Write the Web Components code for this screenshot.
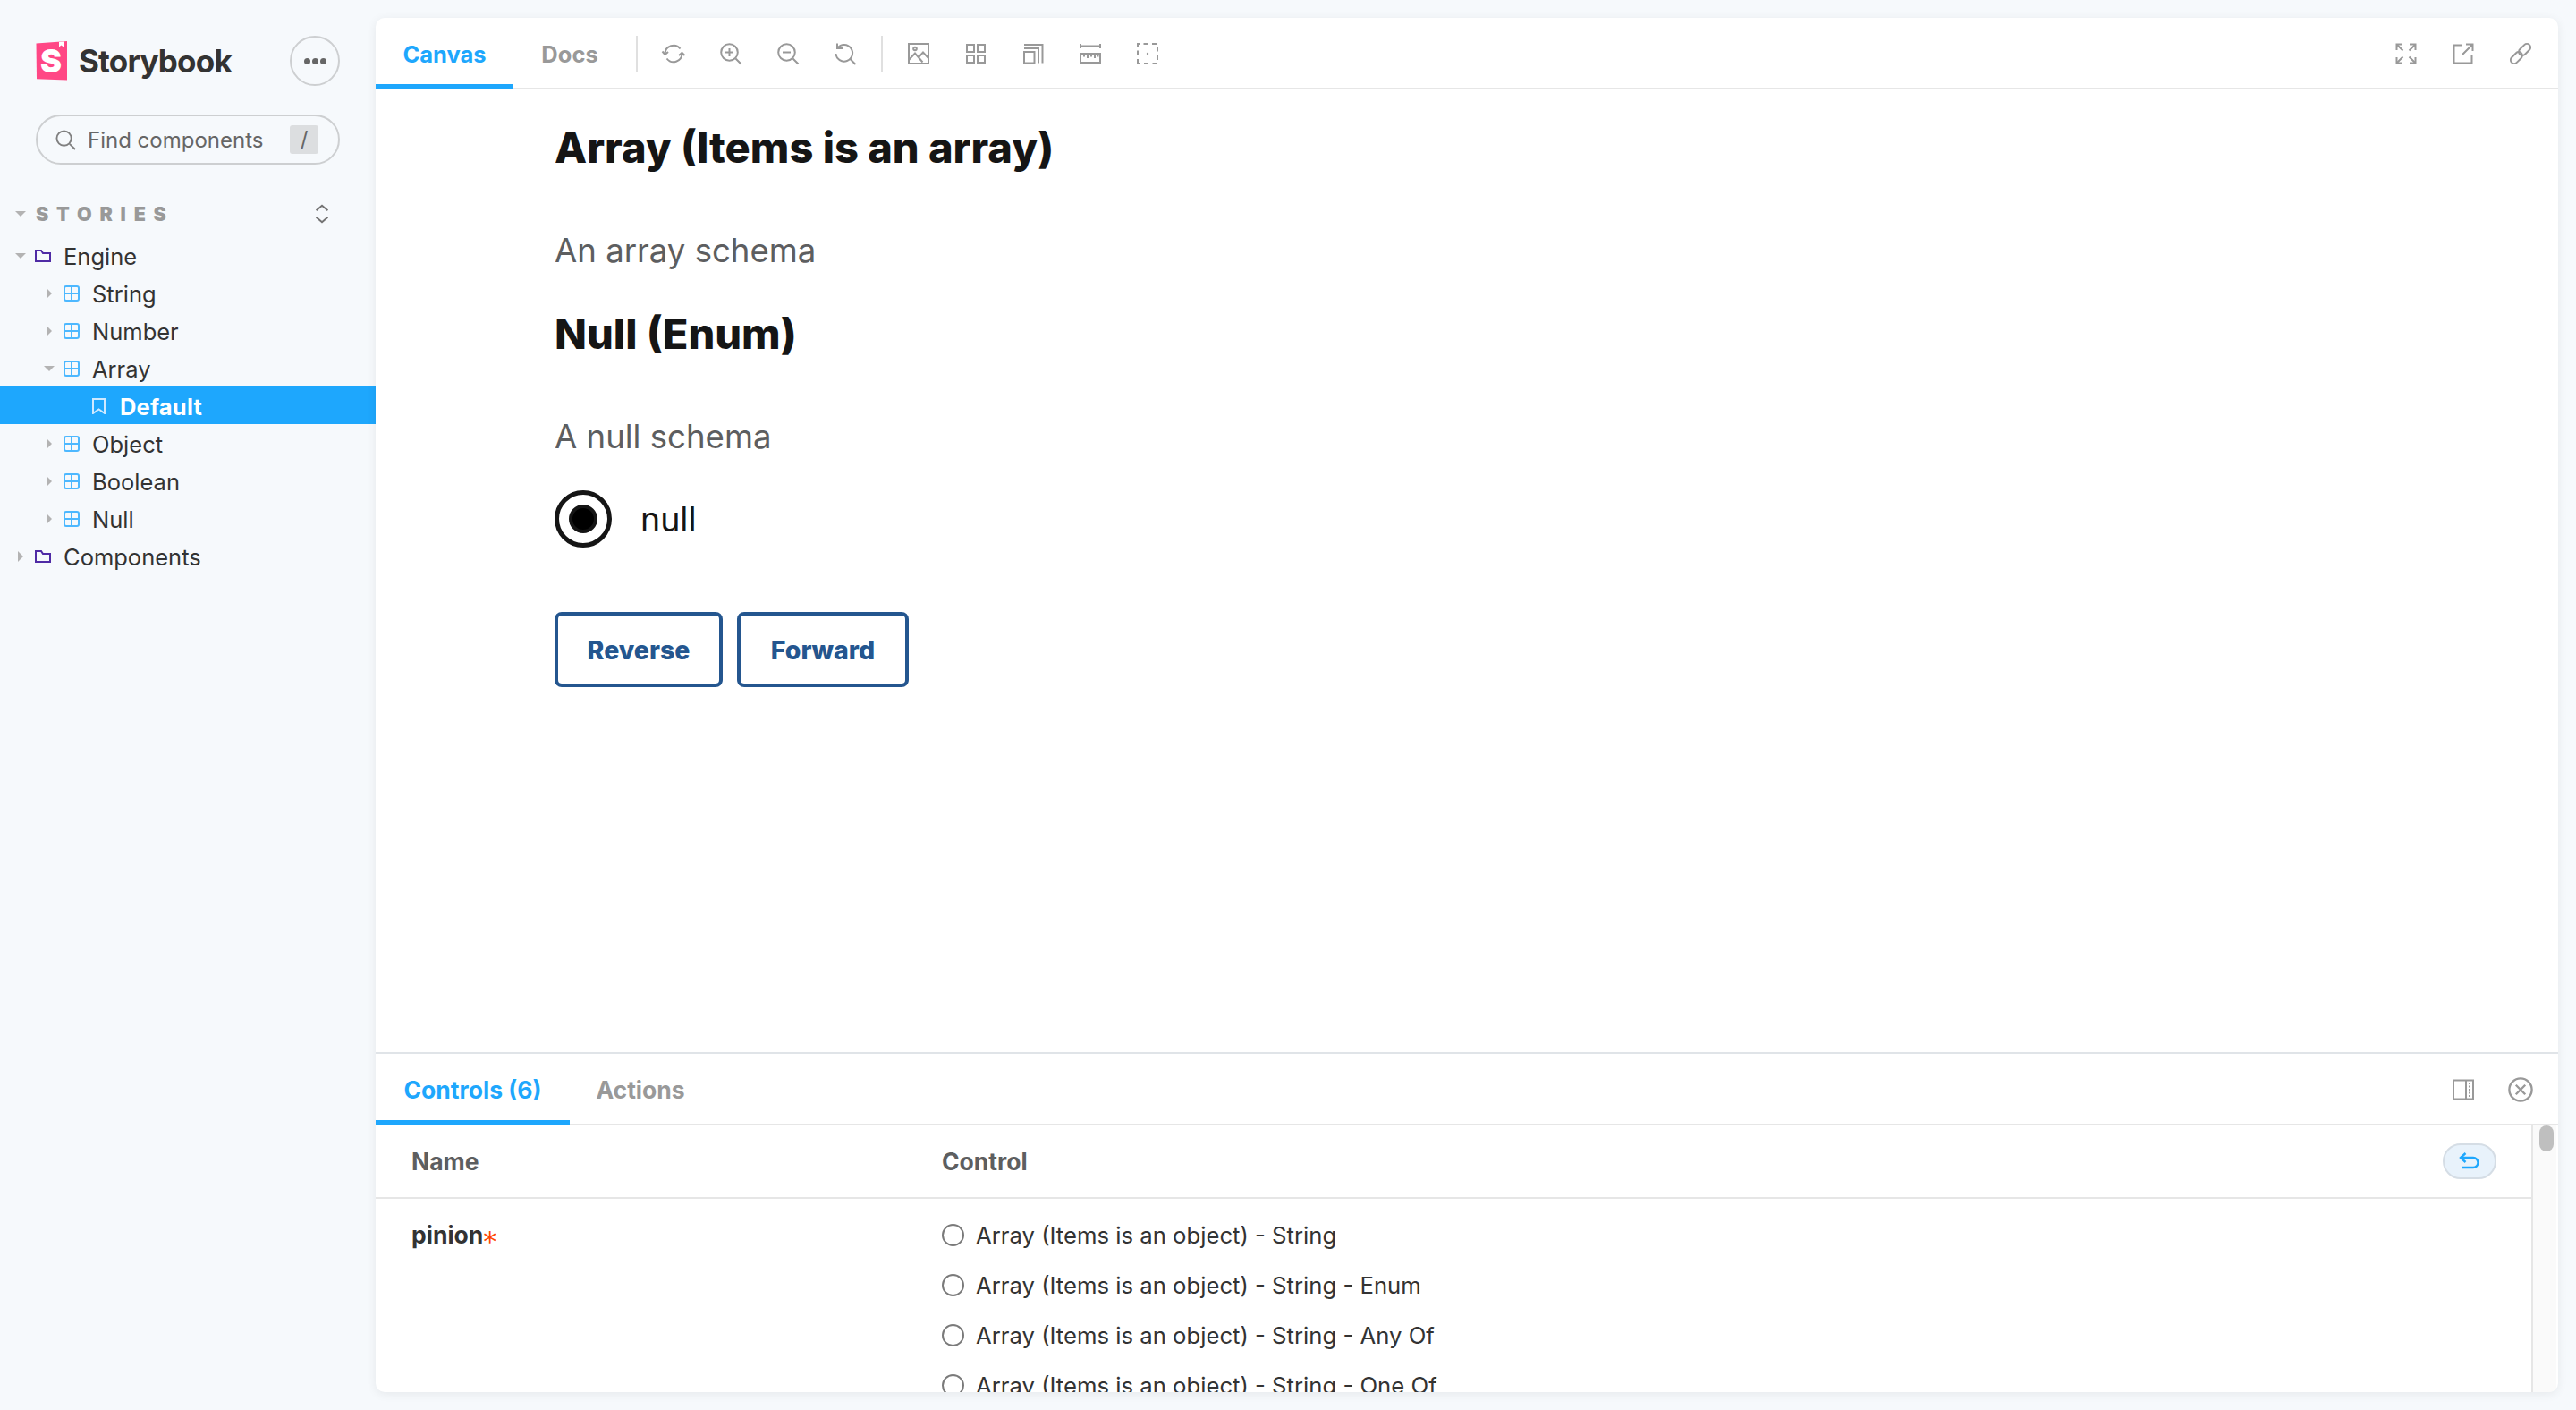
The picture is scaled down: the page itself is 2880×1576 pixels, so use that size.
<!DOCTYPE html>
<html lang="en">
  <head>
    <meta charset="UTF-8" />
    <title>Storybook</title>
    <style>
      html, body { margin: 0; height: 100%; overflow: hidden; background: #f6f9fc; }
    </style>
  </head>
  <body>
    <sb-app>
      <sb-sidebar slot="sidebar">
        <sb-tree-item depth="0" kind="folder" caret="down">Engine</sb-tree-item>
        <sb-tree-item depth="1" kind="component" caret="right">String</sb-tree-item>
        <sb-tree-item depth="1" kind="component" caret="right">Number</sb-tree-item>
        <sb-tree-item depth="1" kind="component" caret="down">Array</sb-tree-item>
        <sb-tree-item depth="2" kind="story" selected>Default</sb-tree-item>
        <sb-tree-item depth="1" kind="component" caret="right">Object</sb-tree-item>
        <sb-tree-item depth="1" kind="component" caret="right">Boolean</sb-tree-item>
        <sb-tree-item depth="1" kind="component" caret="right">Null</sb-tree-item>
        <sb-tree-item depth="0" kind="folder" caret="right">Components</sb-tree-item>
      </sb-sidebar>
      <sb-toolbar slot="toolbar"></sb-toolbar>
      <sb-preview slot="preview"></sb-preview>
      <sb-addons slot="addons">
        <sb-control-option>Array (Items is an object) - String</sb-control-option>
        <sb-control-option>Array (Items is an object) - String - Enum</sb-control-option>
        <sb-control-option>Array (Items is an object) - String - Any Of</sb-control-option>
        <sb-control-option>Array (Items is an object) - String - One Of</sb-control-option>
      </sb-addons>
    </sb-app>

    <script>
      const UI_FONT = 'Inter, "Noto Sans", sans-serif';
      const HEAD_FONT = 'Inter, "Noto Sans", sans-serif';

      // icon shapes, all on a 24 box
      const ICONS = {
        sync: '<path d="M2.5 12a9.5 9.5 0 0 1 17-5.5"/><path d="M21.5 12a9.5 9.5 0 0 1-17 5.5"/><path d="M-0.5 9.5 2.5 13l3.5-3"/><path d="M18 14l3.5-3.2 3 3.2"/>',
        zoomin: '<circle cx="10.5" cy="10.5" r="9.3"/><path d="M17.5 17.5 23.5 23.5M10.5 6v9M6 10.5h9"/>',
        zoomout: '<circle cx="10.5" cy="10.5" r="9.3"/><path d="M17.5 17.5 23.5 23.5M6 10.5h9"/>',
        zoomreset: '<path d="M3.5 5.5A9.3 9.3 0 1 1 1.5 12"/><path d="M3 .5v5.5h6"/><path d="M17.5 18 23.5 24"/>',
        image: '<rect x="1" y="1" width="22" height="22"/><circle cx="8" cy="6.5" r="1.8"/><path d="M1 19l7-7.5 8.5 10M12.5 15.5l4.5-5 6 6.5"/>',
        grid: '<rect x="2" y="2" width="8" height="8"/><rect x="14" y="2" width="8" height="8"/><rect x="2" y="14" width="8" height="8"/><rect x="14" y="14" width="8" height="8"/>',
        outline: '<rect x="2" y="10" width="11.5" height="12.5"/><path d="M2 6h16v16.5M2 2h20.5v20.5"/>',
        ruler: '<path d="M1 1v5M23 1v5M1 3.500h22"/><rect x="1" y="12" width="22" height="10"/><path d="M5 12v3.500M9 12v5M13 12v3.500M17 12v5M20.500 12v3.500"/>',
        dashed: '<path stroke-dasharray="5 4.500" d="M1 23V1h22v22z"/><circle cx="12" cy="12" r="1.200" fill="#999" stroke="none"/>',
        expand: '<path d="M2 2l6.500 6.500M22 2l-6.500 6.500M2 22l6.500-6.500M22 22l-6.500-6.500"/><path d="M1.500 8V1.500H8M16 1.500h6.500V8M1.500 16v6.500H8M16 22.500h6.500V16"/>',
        share: '<path d="M11 2.500H1.500v20h20V13"/><path d="M11 13 22 2M15 1.500h7.500V9"/>',
        link: '<g transform="rotate(-45 12 12)"><rect x="-2" y="8" width="15" height="8" rx="4"/><rect x="11" y="8" width="15" height="8" rx="4"/></g>',
        sidepanel: '<rect x="1" y="1.500" width="22" height="21"/><path d="M15 1.500v21"/><path stroke-dasharray="2 1.500" d="M19 4v16"/>',
        close: '<circle cx="12" cy="12" r="10.800"/><path d="M7.500 7.500l9 9M16.500 7.500l-9 9"/>',
        search: '<circle cx="10" cy="10" r="8.500"/><path d="M16.500 16.500 23 23"/>',
        updown: '<path d="M5 8 12 2l7 6M5 16 12 22l7-6"/>',
        undo: '<path d="M7.500 3 2 8l5.500 5"/><path d="M2.500 8H16a5.500 5.500 0 0 1 0 11H4"/>',
      };

      class SbIcon extends HTMLElement {
        connectedCallback() {
          const size = this.getAttribute("size") || 24;
          const color = this.getAttribute("color") || "#999";
          const weight = this.getAttribute("weight") || 2;
          this.attachShadow({ mode: "open" }).innerHTML = `
            <style>
              :host { display: inline-flex; flex: none; }
              svg { display: block; overflow: visible; }
            </style>
            <svg width="${size}" height="${size}" viewBox="0 0 24 24" fill="none" stroke="${color}" stroke-width="${weight}">
              ${ICONS[this.getAttribute("name")] || ""}
            </svg>`;
        }
      }

      class SbApp extends HTMLElement {
        constructor() {
          super();
          this.attachShadow({ mode: "open" }).innerHTML = `
            <style>
              :host {
                display: grid;
                grid-template-columns: 420px 1fr;
                height: 1576px;
                box-sizing: border-box;
                padding: 20px 20px 20px 0;
                font-family: ${UI_FONT};
              }
              .panel {
                display: flex;
                flex-direction: column;
                background: #fff;
                border-radius: 10px;
                overflow: hidden;
                box-shadow: 0 2px 12px rgba(0, 0, 0, 0.07);
                min-height: 0;
              }
              .stage { flex: 1; min-height: 0; }
            </style>
            <slot name="sidebar"></slot>
            <div class="panel">
              <slot name="toolbar"></slot>
              <div class="stage"><slot name="preview"></slot></div>
              <slot name="addons"></slot>
            </div>`;
        }
      }

      class SbSidebar extends HTMLElement {
        constructor() {
          super();
          this.attachShadow({ mode: "open" }).innerHTML = `
            <style>
              :host { display: block; padding-top: 20px; color: #333; }
              .brand {
                display: flex; align-items: center; justify-content: space-between;
                height: 56px; padding: 0 40px;
              }
              .logo { display: flex; align-items: center; gap: 12px; }
              .logo b {
                font: 700 35px/44px ${HEAD_FONT}; color: #333; letter-spacing: -0.8px;
              }
              .more {
                box-sizing: border-box; width: 56px; height: 56px; border-radius: 50%;
                border: 2px solid #cdcfd1; display: flex; align-items: center; justify-content: center; gap: 2px;
              }
              .more i { width: 7px; height: 7px; background: #666; border-radius: 50%; }
              .search {
                box-sizing: border-box; display: flex; align-items: center; height: 56px;
                margin: 32px 40px 0; padding: 0 22px 0 20px; border: 2px solid #cdcfd1; border-radius: 28px;
              }
              .search span { flex: 1; margin-left: 13px; font-size: 24px; color: #666; }
              .search kbd {
                width: 32px; height: 32px; background: #dcdee0; border-radius: 3px; color: #666;
                font: 24px/32px ${UI_FONT}; text-align: center;
              }
              .section {
                display: flex; align-items: center; height: 46px; margin-top: 32px; padding: 0 49px 0 17px;
              }
              .section .down { width: 0; height: 0; border: 6px solid transparent; border-top: 6px solid #b3b3b3; border-bottom: 0; margin-right: 11px; }
              .section b {
                flex: 1; font: 900 21.500px/26px ${HEAD_FONT}; color: #999; letter-spacing: 8.800px;
              }
              .tree { margin-top: 2px; }
            </style>
            <div class="brand">
              <div class="logo">
                <svg width="36" height="44" viewBox="0 0 36 44" style="display:block">
                  <path d="M0.500 2.500 35 0v43.500l-34-1.300z" fill="#ff4785"/>
                  <text x="17" y="35" text-anchor="middle" font-family="Inter, sans-serif" font-weight="900" font-size="36" fill="#fff">S</text>
                  <path d="M26 1 31 .6v6l-2.500-2-2.500 2z" fill="#fff"/>
                </svg>
                <b>Storybook</b>
              </div>
              <div class="more"><i></i><i></i><i></i></div>
            </div>
            <div class="search">
              <sb-icon name="search" size="23" color="#808080"></sb-icon>
              <span>Find components</span>
              <kbd>/</kbd>
            </div>
            <div class="section">
              <span class="down"></span>
              <b>STORIES</b>
              <sb-icon name="updown" size="22" color="#737373" weight="2.200"></sb-icon>
            </div>
            <div class="tree"><slot></slot></div>`;
        }
      }

      class SbTreeItem extends HTMLElement {
        connectedCallback() {
          const depth = +this.getAttribute("depth");
          const kind = this.getAttribute("kind");
          const caret = this.getAttribute("caret");
          const selected = this.hasAttribute("selected");
          const glyphs = {
            folder: `<svg width="18" height="14" viewBox="0 0 18 14" fill="none" stroke="#4f2ba5" stroke-width="2"><path d="M1 13V1h6l2 3h8v9z"/></svg>`,
            component: `<svg width="18" height="18" viewBox="0 0 18 18" fill="none" stroke="#4db8ff" stroke-width="2"><rect x="1" y="1" width="16" height="16" rx="2"/><path d="M9 1v16M1 9h16"/></svg>`,
            story: `<svg width="15" height="18" viewBox="0 0 15 18" fill="none" stroke="#cfe9ff" stroke-width="2"><path d="M1 1h13v16l-6.500-4.500L1 17z"/></svg>`,
          };
          this.attachShadow({ mode: "open" }).innerHTML = `
            <style>
              :host {
                display: flex; align-items: center; box-sizing: border-box; height: 42px;
                padding: 2px 0 0 ${17 + depth * 32}px;
                font-size: 25.500px; color: #333;
              }
              :host([selected]) { background: #1ea7fd; color: #fff; font-weight: 700; letter-spacing: 0.200px; }
              .caret { width: 22px; height: 12px; flex: none; display: flex; align-items: center; }
              .caret i { display: block; width: 0; height: 0; }
              .caret.down i { border: 6px solid transparent; border-top-color: #b3b3b3; border-bottom: 0; }
              .caret.right i { margin-left: 3px; border: 6px solid transparent; border-left-color: #b3b3b3; border-right: 0; }
              .glyph { width: ${selected ? 15 : 18}px; flex: none; display: flex; margin-right: ${selected ? 16 : 14}px; }
              svg { display: block; }
            </style>
            <span class="caret ${caret || ""}"><i></i></span>
            <span class="glyph">${glyphs[kind]}</span>
            <slot></slot>`;
        }
      }

      class SbTab extends HTMLElement {
        constructor() {
          super();
          this.attachShadow({ mode: "open" }).innerHTML = `
            <style>
              :host {
                display: flex; align-items: center; justify-content: center; box-sizing: border-box; height: 100%;
                padding-top: 6px; font: 700 25.500px ${UI_FONT}; color: #999; border-bottom: 6px solid transparent;
              }
              :host([active]) { color: #1ea7fd; border-bottom-color: #1ea7fd; }
            </style>
            <slot></slot>`;
        }
      }

      class SbToolbar extends HTMLElement {
        constructor() {
          super();
          const left = ["sync", "zoomin", "zoomout", "zoomreset"];
          const mid = ["image", "grid", "outline", "ruler", "dashed"];
          const right = ["expand", "share", "link"];
          const set = (names) => names.map((n) => `<sb-icon name="${n}" size="24"></sb-icon>`).join("");
          this.attachShadow({ mode: "open" }).innerHTML = `
            <style>
              :host {
                display: flex; align-items: stretch; flex: none; height: 80px;
                box-shadow: inset 0 -2px 0 #e6e6e6;
              }
              .group { display: flex; align-items: center; gap: 40px; padding: 0 28px 0 28px; }
              .rule { width: 2px; height: 40px; margin-top: 20px; background: #e0e0e0; }
              .end { margin-left: auto; padding-right: 30px; }
            </style>
            <sb-tab active style="width:154px">Canvas</sb-tab>
            <sb-tab style="width:126px">Docs</sb-tab>
            <span class="rule" style="margin-left:11px"></span>
            <div class="group">${set(left)}</div>
            <span class="rule"></span>
            <div class="group">${set(mid)}</div>
            <div class="group end">${set(right)}</div>`;
        }
      }

      class SbOutlineButton extends HTMLElement {
        constructor() {
          super();
          this.attachShadow({ mode: "open" }).innerHTML = `
            <style>
              :host {
                display: inline-flex; align-items: center; justify-content: center; box-sizing: border-box;
                height: 84px; border: 4px solid #24568f; border-radius: 8px;
                font: 800 28.500px ${HEAD_FONT}; color: #24568f;
              }
            </style>
            <slot></slot>`;
        }
      }

      class SbPreview extends HTMLElement {
        constructor() {
          super();
          this.attachShadow({ mode: "open" }).innerHTML = `
            <style>
              :host { display: block; padding: 35px 0 0 200px; color: #151515; }
              h1 { margin: 0 0 60px; font: 800 47px/60px ${HEAD_FONT}; }
              h2 { margin: 0 0 38px; font: 400 36.600px/50px ${UI_FONT}; color: #5d5e60; }
              h2.last { margin-bottom: 35px; }
              .choice { display: flex; align-items: center; gap: 32px; height: 64px; margin-bottom: 72px; font: 37.500px ${UI_FONT}; }
              .dot { box-sizing: border-box; width: 64px; height: 64px; border: 5px solid #151515; border-radius: 50%; display: flex; align-items: center; justify-content: center; }
              .dot i { width: 32px; height: 32px; border-radius: 50%; background: #000; border: 4px solid #151515; box-sizing: border-box; }
              .actions { display: flex; gap: 16px; }
            </style>
            <h1>Array (Items is an array)</h1>
            <h2>An array schema</h2>
            <h1>Null (Enum)</h1>
            <h2 class="last">A null schema</h2>
            <div class="choice"><span class="dot"><i></i></span>null</div>
            <div class="actions">
              <sb-outline-button style="width:188px">Reverse</sb-outline-button>
              <sb-outline-button style="width:192px">Forward</sb-outline-button>
            </div>`;
        }
      }

      class SbControlOption extends HTMLElement {
        constructor() {
          super();
          this.attachShadow({ mode: "open" }).innerHTML = `
            <style>
              :host { display: flex; align-items: center; gap: 13px; height: 56px; font-size: 25.700px; color: #333; }
              i { box-sizing: border-box; width: 25px; height: 25px; border: 2px solid #7a7a7a; border-radius: 50%; background: #fff; }
            </style>
            <i></i><slot></slot>`;
        }
      }

      class SbAddons extends HTMLElement {
        constructor() {
          super();
          this.attachShadow({ mode: "open" }).innerHTML = `
            <style>
              :host {
                display: flex; flex-direction: column; flex: none; height: 380px;
                box-sizing: border-box; border-top: 2px solid #e0e4e8;
              }
              .bar { display: flex; height: 80px; flex: none; align-items: stretch; box-shadow: inset 0 -2px 0 #e6e6e6; }
              .bar sb-tab { font-size: 26.500px; }
              .tools { margin-left: auto; display: flex; align-items: center; gap: 38px; padding: 0 28px 0 0; }
              .body { flex: 1; display: flex; min-height: 0; }
              .table { flex: 1; min-width: 0; overflow: hidden; }
              .head {
                display: grid; grid-template-columns: 593px 1fr auto; align-items: center; height: 82px;
                padding: 0 40px; border-bottom: 2px solid #e6e6e6; box-sizing: border-box;
                font-weight: 700; font-size: 26.500px; color: #5d5e60;
              }
              .undo {
                display: flex; align-items: center; justify-content: center; box-sizing: border-box;
                width: 60px; height: 40px; margin-right: -1px; border: 2px solid #d5dde5; border-radius: 20px; background: #e8f2fb;
              }
              .row { display: grid; grid-template-columns: 593px 1fr; padding: 12px 40px 0; }
              .name { font-weight: 700; font-size: 26.500px; line-height: 56px; color: #333; }
              .name span { font: 400 30px/0 "DejaVu Sans", sans-serif; color: #ff4400; vertical-align: -8px; }
              .track { width: 28px; flex: none; background: #fafafa; border-left: 2px solid #e6e6e6; margin-right: 2px; box-sizing: border-box; position: relative; }
              .thumb { position: absolute; left: 7px; top: 0; width: 16px; height: 29px; border-radius: 8px; background: #bfbfbf; }
            </style>
            <div class="bar">
              <sb-tab active style="width:217px">Controls (6)</sb-tab>
              <sb-tab style="width:158px">Actions</sb-tab>
              <div class="tools">
                <sb-icon name="sidepanel" size="24"></sb-icon>
                <sb-icon name="close" size="28"></sb-icon>
              </div>
            </div>
            <div class="body">
              <div class="table">
                <div class="head">
                  <span>Name</span><span>Control</span>
                  <span class="undo"><sb-icon name="undo" size="24" color="#1ea7fd" weight="2.400"></sb-icon></span>
                </div>
                <div class="row">
                  <div class="name">pinion<span>*</span></div>
                  <div><slot></slot></div>
                </div>
              </div>
              <div class="track"><div class="thumb"></div></div>
            </div>`;
        }
      }

      customElements.define("sb-icon", SbIcon);
      customElements.define("sb-app", SbApp);
      customElements.define("sb-sidebar", SbSidebar);
      customElements.define("sb-tree-item", SbTreeItem);
      customElements.define("sb-tab", SbTab);
      customElements.define("sb-toolbar", SbToolbar);
      customElements.define("sb-outline-button", SbOutlineButton);
      customElements.define("sb-preview", SbPreview);
      customElements.define("sb-control-option", SbControlOption);
      customElements.define("sb-addons", SbAddons);
    </script>
  </body>
</html>
